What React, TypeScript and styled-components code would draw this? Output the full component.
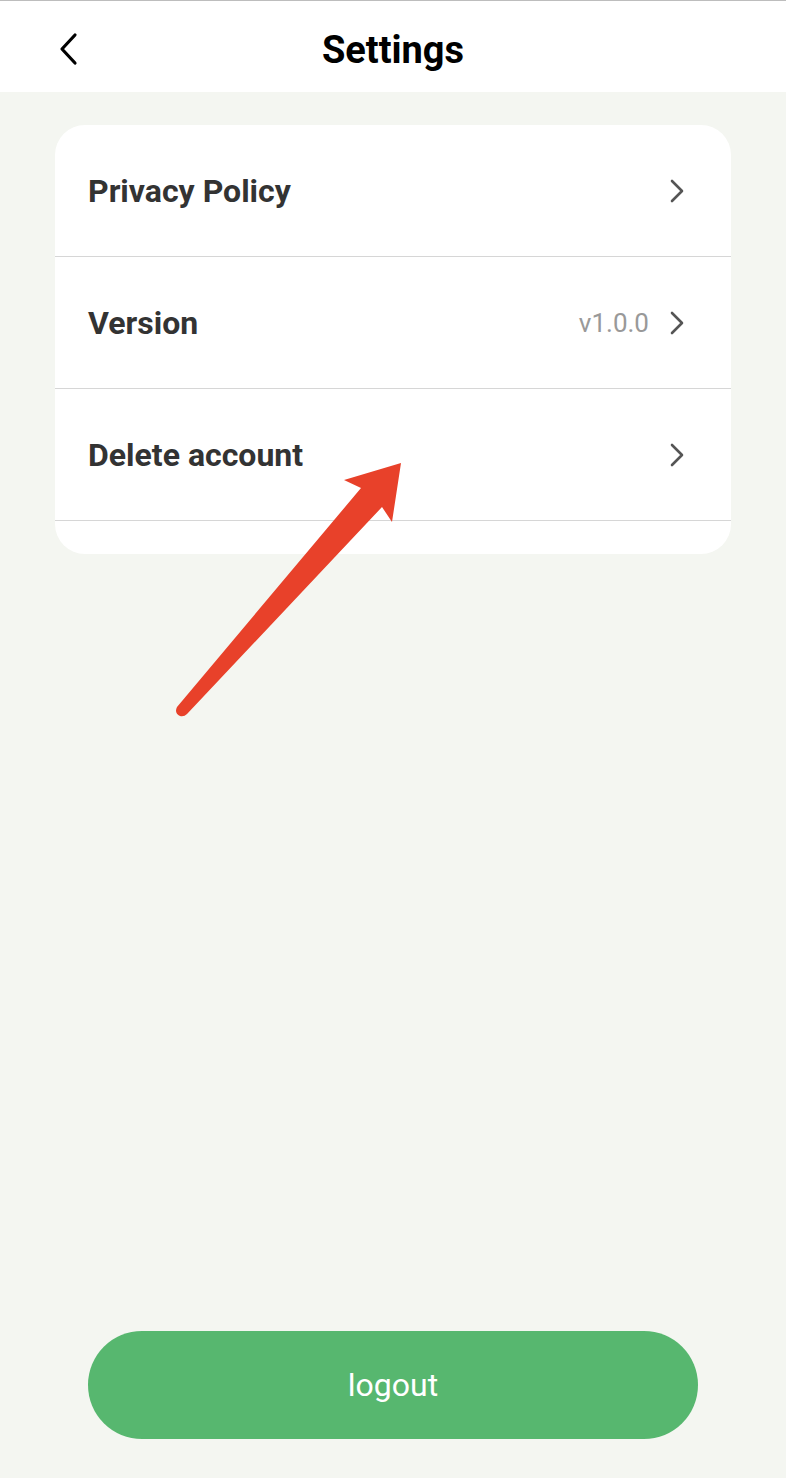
import React from "react";
import styled, { createGlobalStyle } from "styled-components";

const GlobalStyle = createGlobalStyle`
  html, body { margin: 0; padding: 0; }
  body { font-family: Roboto, "Noto Sans", sans-serif; background: #f4f6f1; }
`;

const Page = styled.div`
  position: relative;
  min-height: 1478px;
  display: flex;
  flex-direction: column;
  background: #f4f6f1;
`;

const Header = styled.header`
  height: 91px;
  border-top: 1px solid #bdbdbd;
  background: #ffffff;
  display: flex;
  align-items: center;
  justify-content: center;
  position: relative;
`;

const BackButton = styled.button`
  position: absolute;
  left: 52px;
  top: 28px;
  width: 32px;
  height: 40px;
  border: 0;
  padding: 0;
  background: transparent;
  display: flex;
  align-items: center;
  justify-content: center;
`;

const Title = styled.h1`
  margin: 0;
  font-size: 38px;
  font-weight: 700;
  color: #000;
  letter-spacing: 0;
  transform: translateY(3px);
`;

const Card = styled.section`
  margin: 33px 55px 0 55px;
  background: #fff;
  border-radius: 30px;
  padding-bottom: 33px;
  overflow: hidden;
`;

const Row = styled.div`
  height: 131px;
  border-bottom: 1px solid #d6d6d6;
  display: flex;
  align-items: center;
  padding: 0 46px 0 33px;
`;

const Label = styled.span`
  flex: 1;
  font-size: 32px;
  font-weight: 700;
  color: #333;
`;

const Value = styled.span`
  font-size: 26px;
  color: #999;
  margin-right: 20px;
`;

const Spacer = styled.div`
  flex: 1;
`;

const LogoutButton = styled.button`
  margin: 0 88px 39px 88px;
  height: 108px;
  border: 0;
  border-radius: 54px;
  background: #57b76f;
  color: #fff;
  font-family: Roboto, "Noto Sans", sans-serif;
  font-size: 32px;
  font-weight: 400;
`;

const Overlay = styled.svg`
  position: absolute;
  left: 0;
  top: 0;
  pointer-events: none;
`;

const Chevron = () => (
  <svg width="16" height="24" viewBox="0 0 16 24">
    <polyline points="3,2 13,12 3,22" fill="none" stroke="#555" strokeWidth="2.6" strokeLinecap="round" strokeLinejoin="round" />
  </svg>
);

const items = [
  { label: "Privacy Policy" },
  { label: "Version", value: "v1.0.0" },
  { label: "Delete account" },
];

export default function App() {
  return (
    <>
      <GlobalStyle />
      <Page>
        <Header>
          <BackButton aria-label="back">
            <svg width="22" height="34" viewBox="0 0 22 34">
              <polyline points="18,3 5,17 18,31" fill="none" stroke="#000" strokeWidth="3.2" strokeLinecap="round" strokeLinejoin="round" />
            </svg>
          </BackButton>
          <Title>Settings</Title>
        </Header>
        <Card>
          {items.map((it) => (
            <Row key={it.label}>
              <Label>{it.label}</Label>
              {it.value && <Value>{it.value}</Value>}
              <Chevron />
            </Row>
          ))}
        </Card>
        <Spacer />
        <LogoutButton>logout</LogoutButton>
        <Overlay width="786" height="1478" viewBox="0 0 786 1478">
          <path
            d="M401,463 L344,480 L361,488 L177,707 Q174,713 180,716 Q184,717 187,714 L382,507 L392,522 Z"
            fill="#e8412a"
          />
        </Overlay>
      </Page>
    </>
  );
}
